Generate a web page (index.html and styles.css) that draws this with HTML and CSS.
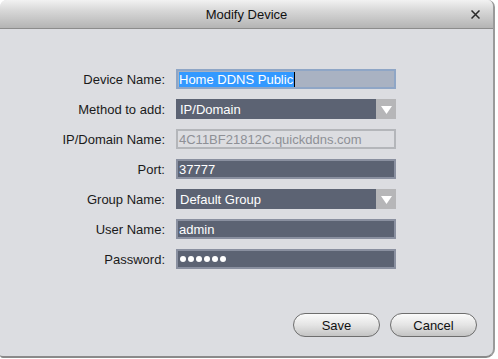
FILE: index.html
```html
<!DOCTYPE html>
<html>
<head>
<meta charset="utf-8">
<link rel="stylesheet" href="styles.css">
</head>
<body>
<div class="dialog">
  <div class="titlebar">
    <span class="title">Modify Device</span>
    <span class="close">
      <svg width="9" height="9" viewBox="0 0 9 9"><path d="M0.5 0.5 L8.5 8.5 M8.5 0.5 L0.5 8.5" stroke="#2a2a2a" stroke-width="1.5"/></svg>
    </span>
  </div>
  <div class="content">
    <div class="form">
      <div class="row"><label>Device Name:</label><div class="field text active"><span class="sel">Home DDNS Public</span><span class="caret"></span></div></div>
      <div class="row"><label>Method to add:</label><div class="field combo"><span class="val">IP/Domain</span><span class="arrow"><svg width="11" height="8" viewBox="0 0 11 8"><path d="M0 0 H11 L5.5 8 Z" fill="#fff"/></svg></span></div></div>
      <div class="row"><label>IP/Domain Name:</label><div class="field disabled"><span class="val">4C11BF21812C.quickddns.com</span></div></div>
      <div class="row"><label>Port:</label><div class="field dark"><span class="val">37777</span></div></div>
      <div class="row"><label>Group Name:</label><div class="field combo"><span class="val">Default Group</span><span class="arrow"><svg width="11" height="8" viewBox="0 0 11 8"><path d="M0 0 H11 L5.5 8 Z" fill="#fff"/></svg></span></div></div>
      <div class="row"><label>User Name:</label><div class="field dark"><span class="val">admin</span></div></div>
      <div class="row"><label>Password:</label><div class="field dark"><span class="dots"><i></i><i></i><i></i><i></i><i></i><i></i></span></div></div>
    </div>
    <div class="buttons">
      <button class="btn">Save</button>
      <button class="btn">Cancel</button>
    </div>
  </div>
</div>
</body>
</html>
```
FILE: styles.css
```css
html, body {
  margin: 0;
  padding: 0;
  background: #ffffff;
}
body {
  width: 498px;
  height: 359px;
  overflow: hidden;
  font-family: "Liberation Sans", Arial, sans-serif;
  font-size: 13px;
  color: #1a1a1a;
}
.dialog {
  width: 493px;
  height: 356px;
  border-right: 2px solid #9a9a9a;
  border-bottom: 2px solid #8a8a8a;
  border-radius: 7px 7px 9px 3px;
  overflow: hidden;
  background: #dcdde1;
  display: flex;
  flex-direction: column;
}
.titlebar {
  height: 28px;
  flex: none;
  background: linear-gradient(#f2f2f2, #d6d6d6 40%, #b4b4b4);
  border-bottom: 1px solid #8c8c8c;
  display: flex;
  align-items: center;
  justify-content: center;
  position: relative;
}
.title {
  font-size: 13px;
  color: #111;
  padding-top: 1px;
}
.close {
  position: absolute;
  right: 13px;
  top: 10px;
  width: 9px;
  height: 9px;
  display: block;
}
.close svg { display: block; }
.content {
  flex: 1;
  display: flex;
  flex-direction: column;
}
.form {
  padding-top: 40px;
  display: flex;
  flex-direction: column;
  gap: 10px;
}
.row {
  display: flex;
  align-items: center;
  height: 20px;
}
.row label {
  width: 176px;
  text-align: right;
  padding-right: 11px;
  box-sizing: border-box;
  color: #1a1a1a;
  font-size: 13px;
}
.field {
  width: 220px;
  height: 20px;
  box-sizing: border-box;
  display: flex;
  align-items: center;
  color: #fff;
  font-size: 13px;
}
.field .val { padding-left: 3px; }
.text.active {
  background: #a9b2c2;
  border: 2px solid #8fa6c6;
  padding-left: 1px;
}
.sel {
  background: #3399ff;
  color: #fff;
  line-height: 15px;
  height: 15px;
  padding-right: 1px;
}
.caret {
  width: 1px;
  height: 15px;
  background: #000;
}
.combo {
  background: #5c6373;
  justify-content: space-between;
}
.combo .val { padding-left: 4px; }
.arrow {
  width: 20px;
  height: 20px;
  background: #b6b6b8;
  display: flex;
  align-items: center;
  justify-content: center;
}
.arrow svg { display: block; margin-top: 1px; }
.disabled {
  background: #dcdde1;
  border: 2px solid #b4b6ba;
  color: #8e9096;
}
.disabled .val { padding-left: 1px; }
.dark {
  background: #5c6373;
  border: 2px solid #8a90a0;
}
.dark .val { padding-left: 1px; }
.dots {
  display: flex;
  gap: 2px;
  padding-left: 2px;
}
.dots i {
  display: block;
  width: 6px;
  height: 6px;
  border-radius: 50%;
  background: #fff;
}
.buttons {
  display: flex;
  justify-content: flex-end;
  gap: 10px;
  padding-right: 16px;
  margin-top: 44px;
}
.btn {
  width: 87px;
  height: 24px;
  border: 1px solid #6e6e6e;
  border-radius: 12px;
  background: linear-gradient(#fbfbfb, #e4e4e4 50%, #c4c4c4);
  font-family: "Liberation Sans", Arial, sans-serif;
  font-size: 13px;
  color: #111;
  padding: 0;
}
```
